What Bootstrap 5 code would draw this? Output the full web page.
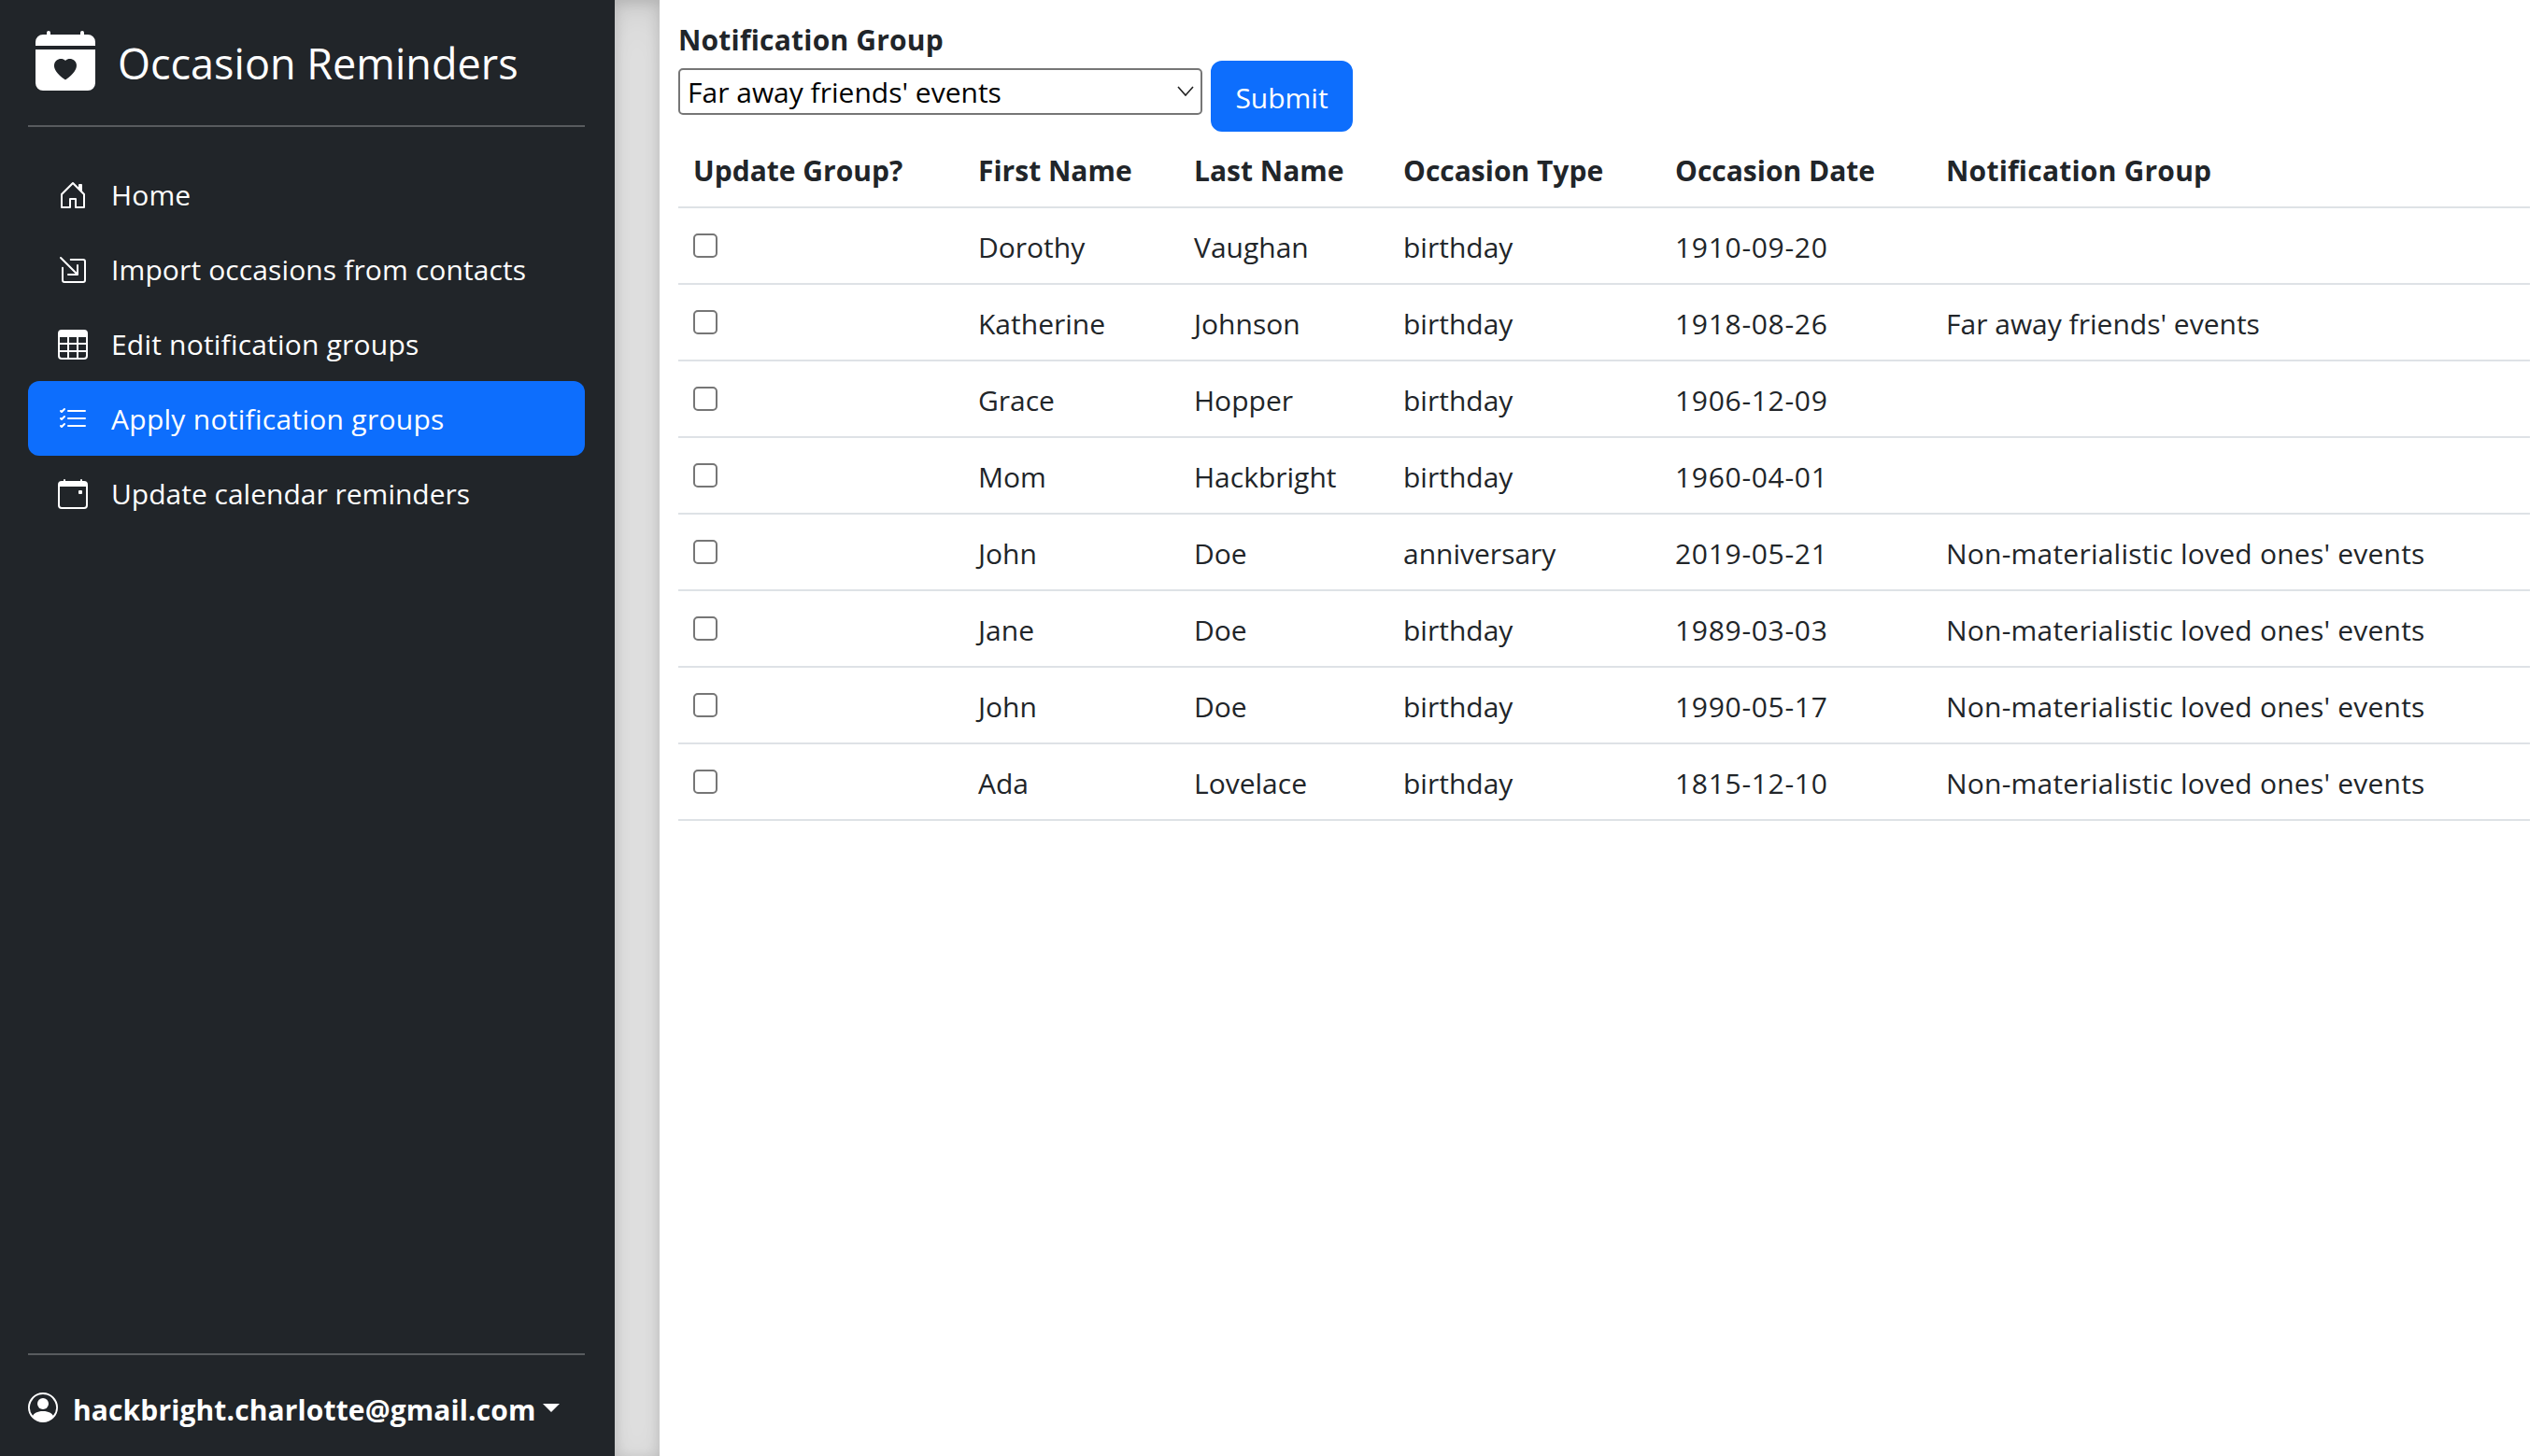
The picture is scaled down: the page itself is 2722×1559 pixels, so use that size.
<!DOCTYPE html>
<html lang="en">
<head>
    <meta charset="UTF-8">
    <meta name="viewport" content="width=device-width, initial-scale=1.0">
    <link href="https://cdn.jsdelivr.net/npm/bootstrap@5.3.0/dist/css/bootstrap.min.css" rel="stylesheet">
    <style>
        :root { --bs-border-width: 2px; --bs-border-radius: 12px; }
        html { font-size: 32px; }
        body { font-family: "Open Sans", "Noto Sans", sans-serif; font-size: 30px; line-height: 48px; height: 1559px; overflow: hidden; }
        .side-panel { width: 658px; height: 1559px; padding: 30px 32px 28px 30px; }
        .side-rule { margin: 32px 0; border-top: 2px solid #fff; opacity: .25; }
        .brand-text { font-size: 45px; line-height: 72px; margin: 2px 0 -2px; }
        .brand-link svg { width: 80px; height: 64px; margin: -2px 16px 0 0; }
        .side-panel .nav-link { height: 80px; padding: 17px 32px 15px; border-radius: 12px; letter-spacing: .12px; }
        .side-panel li:nth-child(3) .nav-link { letter-spacing: .2px; }
        .side-panel li:nth-child(4) .nav-link { letter-spacing: .28px; }
        .side-panel li:nth-child(5) .nav-link { letter-spacing: 0; }
        .side-panel .nav-link svg { width: 32px; height: 32px; margin-right: 25px; vertical-align: -5px; }
        .user-icon { width: 32px; height: 32px; margin-right: 16px; }
        .user-link { font-weight: 700; letter-spacing: .12px; }
        .user-name { margin: 3px 0 -3px; }
        .gutter-bar { width: 48px; flex-shrink: 0; background: rgba(0,0,0,.1); box-shadow: inset 0 .5em 1.5em rgba(0,0,0,.1), inset 0 .125em .5em rgba(0,0,0,.15); }
        .main-area { flex: 1; padding: 19px 0 0 20px; min-width: 0; }
        .group-label { display: block; font-weight: 700; line-height: 48px; margin: 0 0 -2px; letter-spacing: .2px; }
        .group-row { display: flex; align-items: flex-start; height: 76px; }
        .group-select { appearance: none; width: 561px; height: 50px; margin: 8px 9px 0 0; padding: 2px 8px 0; border: 2px solid #767676; border-radius: 5px; color: #000; font: inherit; line-height: 44px; background: #fff url("data:image/svg+xml,%3Csvg xmlns='http://www.w3.org/2000/svg' viewBox='0 0 18 18'%3E%3Cpath d='M1 5l8 9 8-9' fill='none' stroke='%23222' stroke-width='1.6'/%3E%3C/svg%3E") no-repeat right 7px top 13px / 18px 18px; }
        .submit-btn { width: 152px; height: 76px; padding: 2px 0 0; font-size: 30px; }
        .group-table { table-layout: fixed; width: 1982px; margin: 0; }
        .group-table th, .group-table td { padding: 18px 16px 14px; }
        .group-table th { font-weight: 700; }
        .group-table td:nth-child(5) { letter-spacing: .7px; }
        .group-table th:last-child, .long-group { letter-spacing: .22px; }
        .row-check { appearance: none; display: block; width: 26px; height: 26px; margin: 9px 0 0; border: 2px solid #767676; border-radius: 5px; background: #fff; }
        .col-a { width: 305px; } .col-b { width: 231px; } .col-c { width: 224px; }
        .col-d { width: 291px; } .col-e { width: 290px; } .col-f { width: 641px; }
    </style>
    <title>Occasion Reminders</title>
</head>
<body>
<div class="d-flex">
    <div class="side-panel d-flex flex-column flex-shrink-0 text-bg-dark">
        <a href="#" class="brand-link d-flex align-items-center text-white text-decoration-none">
            <svg viewBox="0 0 16 16" fill="currentColor"><path fill-rule="evenodd" d="M4 .5a.5.5 0 0 0-1 0V1H2a2 2 0 0 0-2 2v1h16V3a2 2 0 0 0-2-2h-1V.5a.5.5 0 0 0-1 0V1H4V.5ZM16 14V5H0v9a2 2 0 0 0 2 2h12a2 2 0 0 0 2-2ZM8 7.993c1.664-1.711 5.825 1.283 0 5.132-5.825-3.85-1.664-6.843 0-5.132Z"/></svg>
            <span class="brand-text">Occasion Reminders</span>
        </a>
        <hr class="side-rule">
        <ul class="nav nav-pills flex-column mb-auto">
            <li class="nav-item"><a href="#" class="nav-link text-white">
                <svg viewBox="0 0 16 16" fill="currentColor"><path d="M8.354 1.146a.5.5 0 0 0-.708 0l-6 6A.5.5 0 0 0 1.5 7.5v7a.5.5 0 0 0 .5.5h4.5a.5.5 0 0 0 .5-.5v-4h2v4a.5.5 0 0 0 .5.5H14a.5.5 0 0 0 .5-.5v-7a.5.5 0 0 0-.146-.354L13 5.793V2.5a.5.5 0 0 0-.5-.5h-1a.5.5 0 0 0-.5.5v1.293L8.354 1.146zM2.5 14V7.707l5.5-5.5 5.5 5.5V14H10v-4a.5.5 0 0 0-.5-.5h-3a.5.5 0 0 0-.5.5v4H2.5z"/></svg>Home</a></li>
            <li><a href="#" class="nav-link text-white">
                <svg viewBox="0 0 16 16" fill="currentColor"><path fill-rule="evenodd" d="M6.364 2.5a.5.5 0 0 1 .5-.5H13.5A1.5 1.5 0 0 1 15 3.5v10a1.5 1.5 0 0 1-1.5 1.5h-10A1.5 1.5 0 0 1 2 13.5V6.864a.5.5 0 1 1 1 0V13.5a.5.5 0 0 0 .5.5h10a.5.5 0 0 0 .5-.5v-10a.5.5 0 0 0-.5-.5H6.864a.5.5 0 0 1-.5-.5z"/><path fill-rule="evenodd" d="M11 10.5a.5.5 0 0 1-.5.5h-5a.5.5 0 0 1 0-1h3.793L1.146 1.854a.5.5 0 1 1 .708-.708L10 9.293V5.5a.5.5 0 0 1 1 0v5z"/></svg>Import occasions from contacts</a></li>
            <li><a href="#" class="nav-link text-white">
                <svg viewBox="0 0 16 16" fill="currentColor"><path d="M0 2a2 2 0 0 1 2-2h12a2 2 0 0 1 2 2v12a2 2 0 0 1-2 2H2a2 2 0 0 1-2-2V2zm15 2h-4v3h4V4zm0 4h-4v3h4V8zm0 4h-4v3h3a1 1 0 0 0 1-1v-2zm-5 3v-3H6v3h4zm-5 0v-3H1v2a1 1 0 0 0 1 1h3zm-4-4h4V8H1v3zm0-4h4V4H1v3zm5-3v3h4V4H6zm4 4H6v3h4V8z"/></svg>Edit notification groups</a></li>
            <li><a href="#" class="nav-link active">
                <svg viewBox="0 0 16 16" fill="currentColor"><path fill-rule="evenodd" d="M5 11.5a.5.5 0 0 1 .5-.5h9a.5.5 0 0 1 0 1h-9a.5.5 0 0 1-.5-.5zm0-4a.5.5 0 0 1 .5-.5h9a.5.5 0 0 1 0 1h-9a.5.5 0 0 1-.5-.5zm0-4a.5.5 0 0 1 .5-.5h9a.5.5 0 0 1 0 1h-9a.5.5 0 0 1-.5-.5zM3.854 2.146a.5.5 0 0 1 0 .708l-1.5 1.5a.5.5 0 0 1-.708 0l-.5-.5a.5.5 0 1 1 .708-.708L2 3.293l1.146-1.147a.5.5 0 0 1 .708 0zm0 4a.5.5 0 0 1 0 .708l-1.5 1.5a.5.5 0 0 1-.708 0l-.5-.5a.5.5 0 1 1 .708-.708L2 7.293l1.146-1.147a.5.5 0 0 1 .708 0zm0 4a.5.5 0 0 1 0 .708l-1.5 1.5a.5.5 0 0 1-.708 0l-.5-.5a.5.5 0 0 1 .708-.708l.146.147 1.146-1.147a.5.5 0 0 1 .708 0z"/></svg>Apply notification groups</a></li>
            <li><a href="#" class="nav-link text-white">
                <svg viewBox="0 0 16 16" fill="currentColor"><path d="M11 6.5a.5.5 0 0 1 .5-.5h1a.5.5 0 0 1 .5.5v1a.5.5 0 0 1-.5.5h-1a.5.5 0 0 1-.5-.5v-1z"/><path d="M3.5 0a.5.5 0 0 1 .5.5V1h8V.5a.5.5 0 0 1 1 0V1h1a2 2 0 0 1 2 2v11a2 2 0 0 1-2 2H2a2 2 0 0 1-2-2V3a2 2 0 0 1 2-2h1V.5a.5.5 0 0 1 .5-.5zM1 4v10a1 1 0 0 0 1 1h12a1 1 0 0 0 1-1V4H1z"/></svg>Update calendar reminders</a></li>
        </ul>
        <hr class="side-rule">
        <div class="dropdown">
            <a href="#" class="user-link d-flex align-items-center text-white text-decoration-none dropdown-toggle">
                <svg class="user-icon" viewBox="0 0 16 16" fill="currentColor"><path d="M11 6a3 3 0 1 1-6 0 3 3 0 0 1 6 0z"/><path fill-rule="evenodd" d="M0 8a8 8 0 1 1 16 0A8 8 0 0 1 0 8zm8-7a7 7 0 0 0-5.468 11.37C3.242 11.226 4.805 10 8 10s4.757 1.225 5.468 2.37A7 7 0 0 0 8 1z"/></svg>
                <span class="user-name">hackbright.charlotte@gmail.com</span>
            </a>
        </div>
    </div>
    <div class="gutter-bar"></div>
    <div class="main-area">
        <label class="group-label" for="groupSelect">Notification Group</label>
        <div class="group-row">
            <select class="group-select" id="groupSelect"><option>Far away friends' events</option></select>
            <button class="btn btn-primary submit-btn">Submit</button>
        </div>
        <table class="table group-table">
            <colgroup><col class="col-a"><col class="col-b"><col class="col-c"><col class="col-d"><col class="col-e"><col class="col-f"></colgroup>
            <thead><tr><th>Update Group?</th><th>First Name</th><th>Last Name</th><th>Occasion Type</th><th>Occasion Date</th><th>Notification Group</th></tr></thead>
            <tbody id="rows"></tbody>
        </table>
    </div>
</div>
<script src="https://cdn.jsdelivr.net/npm/bootstrap@5.3.0/dist/js/bootstrap.bundle.min.js"></script>
<script>
    const far = "Far away friends' events";
    const non = "Non-materialistic loved ones' events";
    const occasions = [
        ['Dorothy', 'Vaughan', 'birthday', '1910-09-20', ''],
        ['Katherine', 'Johnson', 'birthday', '1918-08-26', far],
        ['Grace', 'Hopper', 'birthday', '1906-12-09', ''],
        ['Mom', 'Hackbright', 'birthday', '1960-04-01', ''],
        ['John', 'Doe', 'anniversary', '2019-05-21', non],
        ['Jane', 'Doe', 'birthday', '1989-03-03', non],
        ['John', 'Doe', 'birthday', '1990-05-17', non],
        ['Ada', 'Lovelace', 'birthday', '1815-12-10', non]
    ];
    document.getElementById('rows').innerHTML = occasions.map(o =>
        '<tr><td><input class="row-check" type="checkbox"></td>' +
        o.map(v => '<td' + (v === non ? ' class="long-group"' : '') + '>' + v + '</td>').join('') + '</tr>'
    ).join('');
</script>
</body>
</html>
